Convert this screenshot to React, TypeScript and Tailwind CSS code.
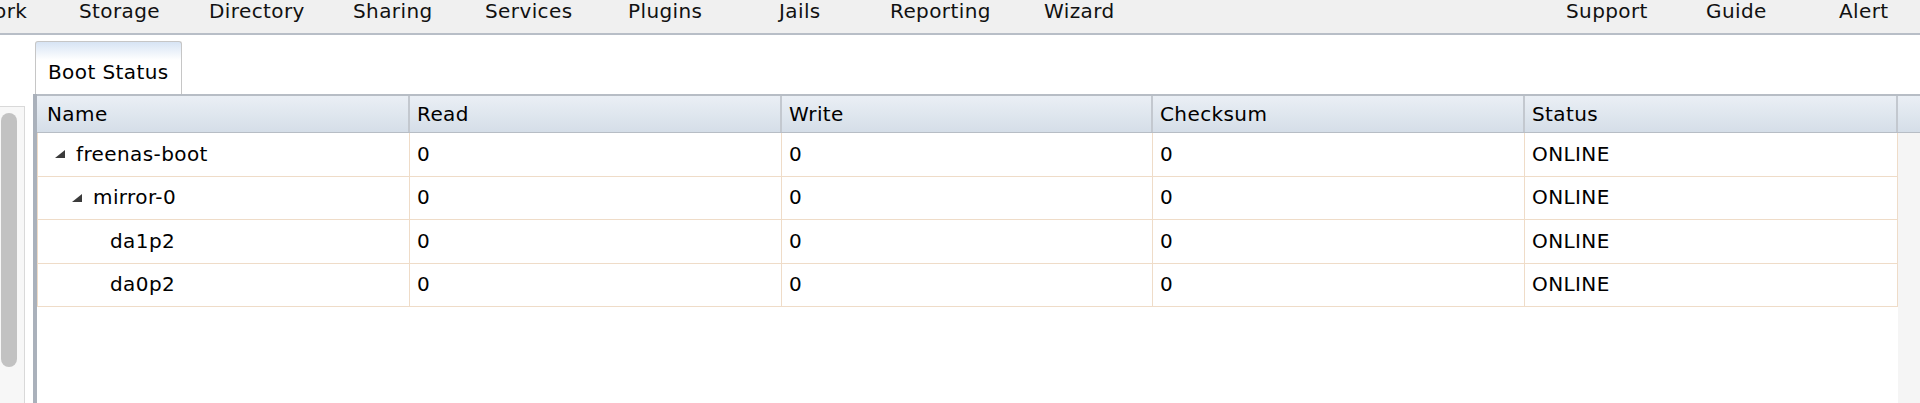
const navLeft = [
  { label: "Network", cls: "-ml-[59px] w-[138px]" },
  { label: "Storage", cls: "w-[130px]" },
  { label: "Directory", cls: "w-[144px]" },
  { label: "Sharing", cls: "w-[132px]" },
  { label: "Services", cls: "w-[143px]" },
  { label: "Plugins", cls: "w-[151px]" },
  { label: "Jails", cls: "w-[111px]" },
  { label: "Reporting", cls: "w-[154px]" },
  { label: "Wizard", cls: "w-[120px]" },
];

const navRight = [
  { label: "Support", cls: "w-[140px]" },
  { label: "Guide", cls: "w-[133px]" },
  { label: "Alert", cls: "w-[81px]" },
];

const columns = ["Name", "Read", "Write", "Checksum", "Status"];

const rows = [
  { name: "freenas-boot", level: 0, expandable: true },
  { name: "mirror-0", level: 1, expandable: true },
  { name: "da1p2", level: 2, expandable: false },
  { name: "da0p2", level: 2, expandable: false },
];

const indent = ["ml-0", "ml-[17px]", "ml-[34px]"];

const Expander = () => (
  <svg width="10" height="8" viewBox="0 0 10 8" className="mr-[11px] shrink-0">
    <polygon points="10,0 10,8 0,8" fill="#3b3b3b" />
  </svg>
);

export default function App() {
  return (
    <div className="w-[1920px] h-[403px] overflow-hidden bg-white font-['DejaVu_Sans',sans-serif] text-[20px] tracking-[0.4px] text-black">
      {/* top menu */}
      <nav className="h-[35px] bg-[#f0f0f0] border-b-2 border-[#b8bec7] flex items-start leading-[23px] text-[#111] whitespace-nowrap overflow-hidden">
        {navLeft.map((item) => (
          <span key={item.label} className={`shrink-0 ${item.cls}`}>
            {item.label}
          </span>
        ))}
        <div className="ml-auto flex">
          {navRight.map((item) => (
            <span key={item.label} className={`shrink-0 ${item.cls}`}>
              {item.label}
            </span>
          ))}
        </div>
      </nav>

      <div className="flex h-[368px]">
        {/* left tree pane with scrollbar */}
        <div className="w-[25px] mt-[71px] border-t border-r border-[#d9d9d9] bg-[#f7f7f7] pl-[1px] pt-[6px]">
          <div className="w-[16px] h-[254px] rounded-full bg-[#c2c2c2]" />
        </div>

        <div className="ml-[8px] flex-1 flex flex-col pt-[6px]">
          {/* tab strip */}
          <div className="h-[53px] pl-[2px] flex">
            <div className="h-[53px] w-[147px] border border-b-0 border-[#c6c6c6] rounded-t-[3px] bg-linear-to-b from-[#d7e4f4] from-0% to-white to-35% pl-[12px] pt-[19px] leading-[23px]">
              Boot Status
            </div>
          </div>

          {/* grid panel */}
          <div className="flex-1 flex flex-col border-l-4 border-[#aab1bb]">
            <div className="h-[39px] flex border-t-2 border-b border-[#b7bdc5] bg-linear-to-b from-[#eaeff5] to-[#d5dee8]">
              <div className="grid grid-cols-[373px_372px_371px_372px_373px] w-[1861px] shrink-0">
                {columns.map((c, i) => (
                  <div
                    key={c}
                    className={`flex items-center border-r-2 border-[#c3c8cf] leading-[23px] ${i === 0 ? "pl-[10px]" : "pl-[7px]"}`}
                  >
                    {c}
                  </div>
                ))}
              </div>
              <div className="flex-1" />
            </div>

            <div className="flex-1 flex">
              <div className="w-[1861px] shrink-0 bg-white">
                {rows.map((r) => (
                  <div
                    key={r.name}
                    className="h-[43.5px] grid grid-cols-[373px_372px_371px_372px_373px] border-b border-[#efdcc8] leading-[23px]"
                  >
                    <div className="flex items-center border-l border-r border-[#efdcc8] pl-[17px]">
                      <div className={`flex items-center ${indent[r.level]}`}>
                        {r.expandable ? <Expander /> : <span className="w-[21px] shrink-0" />}
                        <span>{r.name}</span>
                      </div>
                    </div>
                    <div className="flex items-center border-r border-[#efdcc8] pl-[7px]">0</div>
                    <div className="flex items-center border-r border-[#efdcc8] pl-[7px]">0</div>
                    <div className="flex items-center border-r border-[#efdcc8] pl-[7px]">0</div>
                    <div className="flex items-center border-r border-[#efdcc8] pl-[7px]">ONLINE</div>
                  </div>
                ))}
              </div>
              <div className="flex-1 bg-[#f5f5f5]" />
            </div>
          </div>
        </div>
      </div>
    </div>
  );
}
